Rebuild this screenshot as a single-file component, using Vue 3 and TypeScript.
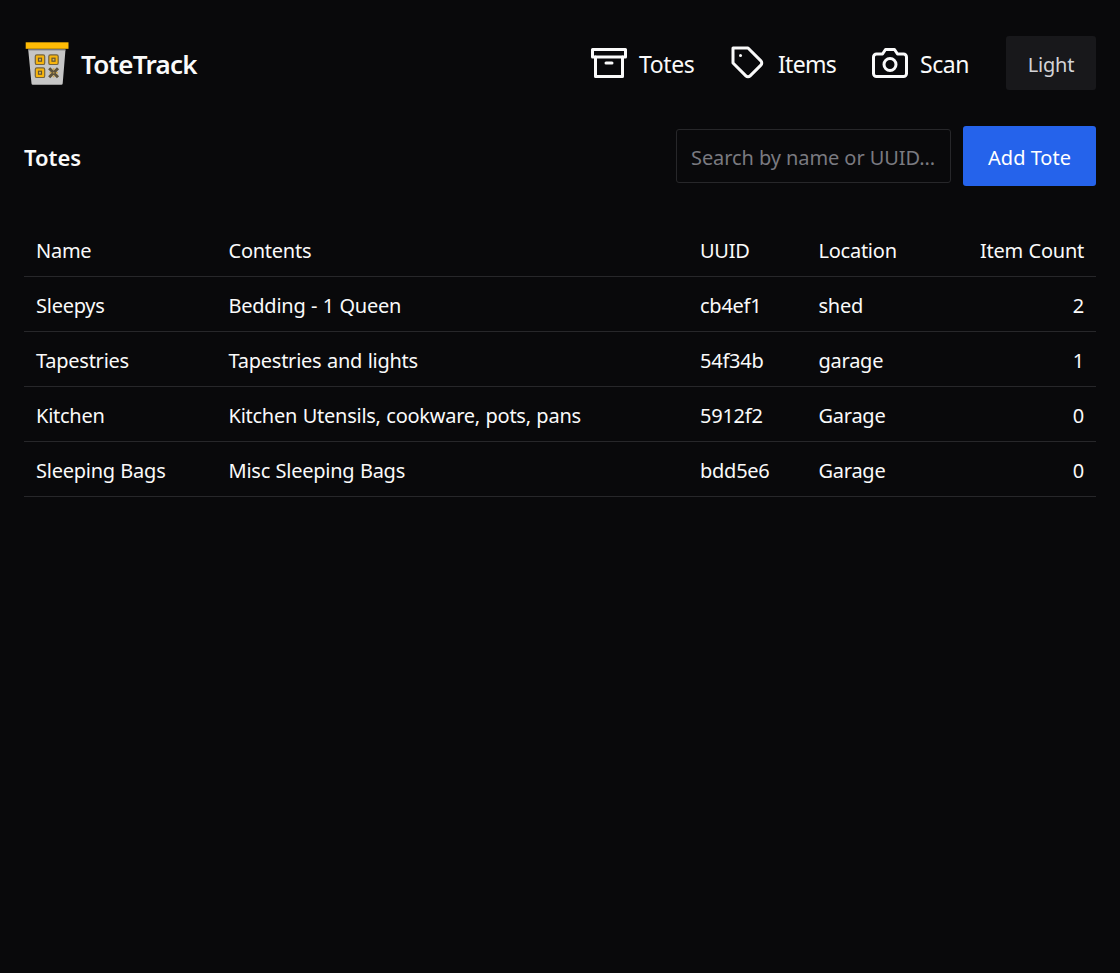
<script setup lang="ts">
import { ref, computed } from 'vue'

interface Tote {
  name: string
  contents: string
  uuid: string
  location: string
  count: number
}

const totes: Tote[] = [
  { name: 'Sleepys', contents: 'Bedding - 1 Queen', uuid: 'cb4ef1', location: 'shed', count: 2 },
  { name: 'Tapestries', contents: 'Tapestries and lights', uuid: '54f34b', location: 'garage', count: 1 },
  { name: 'Kitchen', contents: 'Kitchen Utensils, cookware, pots, pans', uuid: '5912f2', location: 'Garage', count: 0 },
  { name: 'Sleeping Bags', contents: 'Misc Sleeping Bags', uuid: 'bdd5e6', location: 'Garage', count: 0 },
]

const query = ref('')
const visible = computed(() => {
  const q = query.value.trim().toLowerCase()
  return totes.filter((t) => !q || t.name.toLowerCase().includes(q) || t.uuid.includes(q))
})
</script>

<template>
  <div class="page">
    <header class="header">
      <a class="brand">
        <svg class="logo" viewBox="0 0 45 45">
          <path d="M4.200 8.500H41.500L38.700 42.500Q38.600 43.800 37.300 43.800H8.800Q7.600 43.800 7.500 42.500Z" fill="#c6c6c6" />
          <path d="M4.200 9H41.500" stroke="#8c8c8c" stroke-width="1" />
          <rect x="1.700" y="1.300" width="42.800" height="6.500" fill="#ffbb05" />
          <g fill="#f8b50d" stroke="#75643c" stroke-width="1.200">
            <rect x="11.300" y="13.900" width="9.400" height="9.600" rx="1.600" />
            <rect x="24.800" y="13.900" width="9.400" height="9.600" rx="1.600" />
            <rect x="11.300" y="26.900" width="9.400" height="9.600" rx="1.600" />
          </g>
          <g fill="#d8ba6a" stroke="#65552f" stroke-width="1.200">
            <rect x="14.500" y="17.200" width="3" height="3" />
            <rect x="28" y="17.200" width="3" height="3" />
            <rect x="14.500" y="30.200" width="3" height="3" />
          </g>
          <path d="M25.200 27.200L34 36.200M34 27.200L25.200 36.200" stroke="#5c523c" stroke-width="3" />
          <path d="M29.600 27.200V29M29.600 34.500V36.300M25.500 31.700H27.300M32 31.700H33.800" stroke="#d0a548" stroke-width="1.600" />
          <rect x="28.800" y="30.900" width="1.700" height="1.700" fill="#a88a48" />
        </svg>
        <span class="brand-name">ToteTrack</span>
      </a>
      <nav class="nav">
        <a class="link totes">
          <svg class="icon" viewBox="0 0 24 24">
            <polyline points="21 8 21 21 3 21 3 8" />
            <rect x="1" y="3" width="22" height="5" />
            <line x1="10" y1="12" x2="14" y2="12" />
          </svg>
          <span class="label">Totes</span>
        </a>
        <a class="link items">
          <svg class="icon" viewBox="0 0 24 24">
            <path d="M20.590 13.410l-7.170 7.170a2 2 0 0 1-2.830 0L2 12V2h10l8.590 8.590a2 2 0 0 1 0 2.820z" />
            <line x1="7" y1="7" x2="7.010" y2="7" />
          </svg>
          <span class="label">Items</span>
        </a>
        <a class="link scan">
          <svg class="icon" viewBox="0 0 24 24">
            <path d="M23 19a2 2 0 0 1-2 2H3a2 2 0 0 1-2-2V8a2 2 0 0 1 2-2h4l2-3h6l2 3h4a2 2 0 0 1 2 2z" />
            <circle cx="12" cy="13" r="4" />
          </svg>
          <span class="label">Scan</span>
        </a>
        <button class="theme" type="button">Light</button>
      </nav>
    </header>

    <section class="toolbar">
      <h1 class="title">Totes</h1>
      <div class="actions">
        <input v-model="query" class="search" type="text" placeholder="Search by name or UUID..." />
        <button class="add" type="button">Add Tote</button>
      </div>
    </section>

    <table class="table">
      <colgroup>
        <col class="c-name" />
        <col class="c-contents" />
        <col class="c-uuid" />
        <col class="c-location" />
        <col class="c-count" />
      </colgroup>
      <thead>
        <tr>
          <th>Name</th>
          <th>Contents</th>
          <th>UUID</th>
          <th>Location</th>
          <th class="num">Item Count</th>
        </tr>
      </thead>
      <tbody>
        <tr v-for="t in visible" :key="t.uuid">
          <td>{{ t.name }}</td>
          <td>{{ t.contents }}</td>
          <td>{{ t.uuid }}</td>
          <td>{{ t.location }}</td>
          <td class="num">{{ t.count }}</td>
        </tr>
      </tbody>
    </table>
  </div>
</template>

<style>
html,
body {
  margin: 0;
  background: #09090b;
}
</style>

<style scoped>
.page {
  box-sizing: border-box;
  min-height: 973px;
  padding: 36px 24px 0;
  background: #09090b;
  color: #fafafa;
  font-family: 'Segoe UI', 'Noto Sans', sans-serif;
  font-size: 20px;
  line-height: 30px;
  letter-spacing: -0.25px;
  word-spacing: 0.6px;
}
.header {
  display: flex;
  justify-content: space-between;
  align-items: center;
  height: 54px;
}
.brand {
  display: flex;
  align-items: center;
  gap: 12px;
}
.logo {
  width: 45px;
  height: 45px;
}
.brand-name {
  padding-top: 2px;
  font-size: 26px;
  line-height: 42px;
  font-weight: 600;
  letter-spacing: -0.75px;
}
.nav {
  display: flex;
  align-items: center;
}
.link {
  display: flex;
  align-items: center;
  gap: 12px;
  font-size: 23px;
  line-height: 36px;
  letter-spacing: -0.4px;
  white-space: nowrap;
}
.label {
  padding-top: 2px;
}
.totes {
  width: 139px;
}
.items {
  width: 142px;
  letter-spacing: -0.7px;
}
.scan {
  width: 134px;
}
.icon {
  flex: none;
  width: 36px;
  height: 36px;
  fill: none;
  stroke: currentColor;
  stroke-width: 2;
  stroke-linecap: round;
  stroke-linejoin: round;
}
button,
input {
  box-sizing: border-box;
  font: inherit;
  letter-spacing: inherit;
}
.theme {
  width: 90px;
  height: 54px;
  padding: 3px 0 0;
  border: 0;
  border-radius: 3px;
  background: #18181b;
  color: #d4d4d8;
}
.toolbar {
  display: flex;
  justify-content: space-between;
  align-items: center;
  height: 60px;
  margin-top: 36px;
}
.title {
  margin: 0;
  padding-top: 2px;
  font-size: 22px;
  font-weight: 600;
  letter-spacing: 0;
}
.actions {
  display: flex;
  align-items: center;
  gap: 12px;
}
.search {
  width: 275px;
  height: 54px;
  padding: 2px 14px 0;
  border: 1px solid #27272a;
  border-radius: 3px;
  background: transparent;
  color: #fafafa;
  letter-spacing: -0.08px;
  outline: none;
}
.search::placeholder {
  color: #7a7a80;
  opacity: 1;
}
.add {
  width: 133px;
  height: 60px;
  padding: 3px 0 0;
  border: 0;
  border-radius: 3px;
  background: #2563eb;
  color: #fff;
  letter-spacing: 0;
}
.table {
  width: 1072px;
  margin-top: 36px;
  border-collapse: separate;
  border-spacing: 0;
  table-layout: fixed;
}
.c-name {
  width: 192.500px;
}
.c-contents {
  width: 471.500px;
}
.c-uuid {
  width: 118.500px;
}
.c-location {
  width: 161.500px;
}
.c-count {
  width: 128px;
}
th,
td {
  box-sizing: border-box;
  height: 55px;
  padding: 14px 12px 10px;
  border-bottom: 1px solid #27272a;
  font-weight: 400;
  text-align: left;
  white-space: nowrap;
}
.num {
  text-align: right;
}
</style>
